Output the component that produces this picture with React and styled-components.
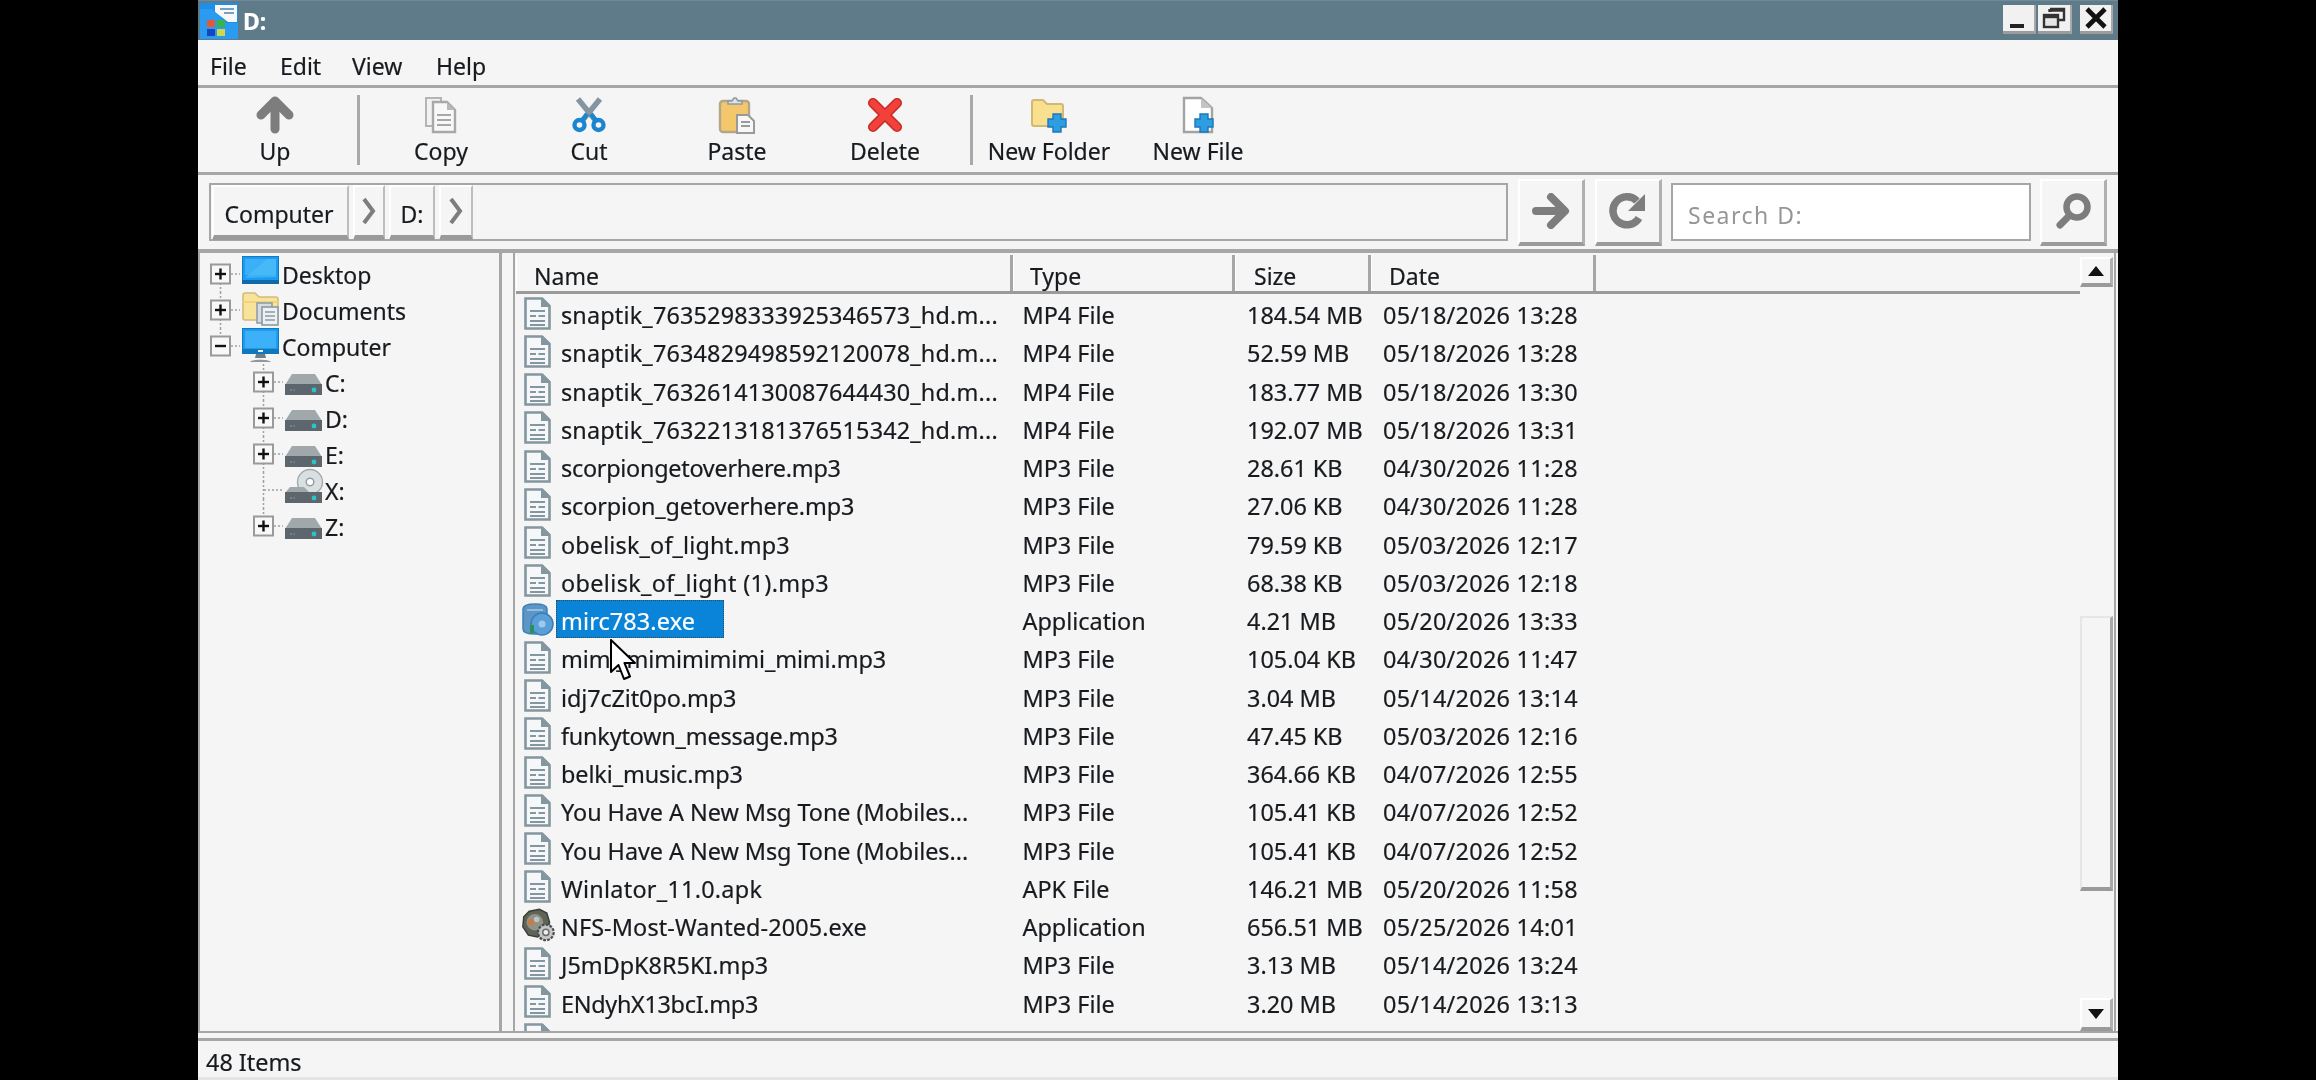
import React from "react";
import styled, { createGlobalStyle } from "styled-components";

const Global = createGlobalStyle`
  html, body { margin: 0; padding: 0; background: #000; }
  * { box-sizing: border-box; }
`;

const C = { face: "#f5f5f5", line: "#a6a6a6", dark: "#9a9a9a", text: "#171a1e", ico: "#7d7d7d", slate: "#84969f" };

const Page = styled.div`
  width: 2316px; height: 1080px; background: #000; display: flex; justify-content: center; overflow: hidden;
`;
const Window = styled.div`
  position: relative; width: 1920px; height: 1080px; background: ${C.face}; display: flex; flex-direction: column;
  font-family: "Noto Sans", "DejaVu Sans", sans-serif; font-size: 23px; color: ${C.text}; filter: blur(0.55px);
  -webkit-text-stroke: 0.2px currentColor;
`;
const TitleBar = styled.div`
  height: 40px; flex: none; background: #5f7b8a; display: flex; align-items: center; padding: 0 5px 0 2px; border-top: 1px solid #6f8b9a;
`;
const TitleText = styled.div`
  color: #fff; font-weight: 700; font-size: 23px; margin-left: 5px; flex: 1;
`;
const WinButton = styled.div`
  width: ${p => p.$w}px; height: 29px; margin-left: ${p => p.$ml}px; margin-top: -2px; background: #f1f1f1;
  border-bottom: 3px solid #9c9c9c; border-right: 2px solid #a8a8a8; display: flex; align-items: center; justify-content: center;
`;
const MenuBar = styled.div`
  height: 48px; flex: none; display: flex; align-items: center; padding: 6px 0 0 12px; border-bottom: 3px solid ${C.line};
`;
const MenuItem = styled.div`
  width: ${p => p.$w}px;
`;
const Toolbar = styled.div`
  height: 87px; flex: none; display: flex; border-bottom: 3px solid ${C.line};
`;
const ToolButton = styled.div`
  width: ${p => p.$w}px; flex: none; display: flex; flex-direction: column; align-items: center; padding-top: 8px;
`;
const ToolIcon = styled.div`
  height: 38px; display: flex; align-items: center; justify-content: center;
`;
const ToolLabel = styled.div`
  margin-top: 2px; line-height: 30px;
`;
const ToolSep = styled.div`
  width: 3px; flex: none; margin: 7px ${p => p.$r}px 7px ${p => p.$l}px; background: #a9a9a9;
`;
const AddressBar = styled.div`
  height: 78px; flex: none; display: flex; align-items: center; padding: 0 11px; border-bottom: 4px solid ${C.line};
`;
const PathBox = styled.div`
  width: 1299px; height: 58px; flex: none; border: 2px solid ${C.line}; display: flex; align-items: stretch; padding-left: 1px; gap: 4px; margin-right: 10px;
`;
const Crumb = styled.div`
  width: ${p => p.$w}px; flex: none; display: flex; align-items: center; justify-content: center; background: ${C.face};
  padding: ${p => p.$pt || 0}px ${p => p.$pr || 0}px 0 0;
  border-left: 2px solid #fff; border-top: 2px solid #fff; border-right: 2px solid #bdbdbd; border-bottom: 5px solid ${C.dark}; margin-bottom: -1px;
`;
const RaisedButton = styled.div`
  width: 67px; height: 67px; flex: none; margin-right: ${p => p.$mr}px; display: flex; align-items: center; justify-content: center;
  background: ${C.face}; border-left: 2px solid #fff; border-top: 2px solid #fff; border-right: 3px solid #b0b0b0; border-bottom: 4px solid ${C.dark};
`;
const SearchBox = styled.div`
  width: 360px; height: 58px; flex: none; margin-right: 9px; background: #fff; border: 2px solid ${C.line}; padding: 5px 0 0 15px;
  display: flex; align-items: center; color: #969696; letter-spacing: 1.5px; -webkit-text-stroke: 0;
`;
const Panes = styled.div`
  flex: 1; display: flex; min-height: 0; border-bottom: 2px solid ${C.line};
`;
const TreePane = styled.div`
  width: 304px; flex: none; border-left: 2px solid ${C.line}; border-right: 3px solid ${C.line}; padding-top: 3px; overflow: hidden;
`;
const TreeRow = styled.div`
  height: 36px; display: flex; align-items: center; padding-left: ${p => 2 + p.$depth * 43}px;
`;
const TreeIcon = styled.div`
  width: 41px; height: 36px; flex: none; align-self: flex-start; margin-left: ${p => (p.$depth ? 0 : 0)}px;
`;
const TreeLabel = styled.div`
  height: 36px; line-height: 38px; margin-left: -1px;
`;
const ListPane = styled.div`
  width: 1603px; margin-left: 11px; flex: none; display: flex; border-left: 2px solid ${C.line}; border-right: 2px solid ${C.line}; padding-left: 1px; padding-top: 2px;
`;
const ListColumn = styled.div`
  flex: 1; min-width: 0; display: flex; flex-direction: column; overflow: hidden;
`;
const HeaderRow = styled.div`
  height: 39px; flex: none; display: flex; border-bottom: 3px solid ${C.dark};
`;
const HeaderCell = styled.div`
  width: ${p => p.$w}px; flex: none; padding: 6px 0 0 ${p => p.$pl}px; display: flex; align-items: center; border-right: 3px solid ${C.line}; border-left: 1px solid #fff;
`;
const Rows = styled.div`
  flex: 1; overflow: hidden; display: grid; grid-auto-rows: 38.25px; align-content: start; font-size: 23.4px;
`;
const Row = styled.div`
  display: grid; grid-template-columns: 505.5px 224.5px 136px 1fr; align-items: center; white-space: nowrap; padding-left: 1px;
`;
const NameCell = styled.div`
  display: flex; align-items: center; height: 100%;
`;
const RowIcon = styled.div`
  width: 39px; flex: none; display: flex; align-items: center; padding-left: ${p => p.$pl}px;
`;
const NameLabel = styled.div`
  padding: 0 ${p => (p.$sel ? 29 : 3)}px 0 5px; height: 38px; line-height: 42px; letter-spacing: ${p => p.$sp}px;
  ${p => p.$sel && `background: #0a84d8; color: #fff; outline: 1px dotted #3a4a55; outline-offset: -1px;`}
`;
const Cell = styled.div`
  height: 38px; line-height: 42px;
`;
const DateCell = styled(Cell)`
  letter-spacing: 0.28px;
`;
const Scrollbar = styled.div`
  width: 33px; flex: none; margin-right: 1px; display: flex; flex-direction: column; align-items: stretch;
`;
const ScrollButton = styled.div`
  height: ${p => p.$h}px; margin-top: ${p => p.$mt}px; background: ${C.face}; display: flex; align-items: center; justify-content: center;
  border-left: 2px solid #fff; border-top: 2px solid #fff; border-right: 3px solid #b0b0b0; border-bottom: 4px solid ${C.dark};
`;
const ScrollThumb = styled.div`
  height: 275px; margin-top: 329px; background: ${C.face};
  border-left: 2px solid #e6e6e6; border-top: 2px solid #e6e6e6; border-right: 3px solid #a9a9a9; border-bottom: 4px solid ${C.dark};
`;
const ScrollSpace = styled.div`
  flex: 1;
`;
const StatusBar = styled.div`
  height: 42px; flex: none; margin-top: 5px; border-top: 3px solid ${C.line}; border-bottom: 3px solid #e4e4e4; padding: 6px 0 0 8px; display: flex; align-items: center; font-size: 23.4px;
`;
const CursorMark = styled.svg`
  position: absolute; left: 412px; top: 639px;
`;

/* ---------- drawings ---------- */
const UpIcon = () => (
  <svg width="38" height="38" viewBox="0 0 38 38">
    <path d="M19 33V6M5 19 19 5l14 14" fill="none" stroke={C.ico} strokeWidth="9" strokeLinecap="round" strokeLinejoin="round" />
  </svg>
);
const CopyIcon = () => (
  <svg width="34" height="38" viewBox="0 0 34 38">
    <path d="M2 2h15v28H2z" fill="#f2f2f2" stroke="#b4b4b4" strokeWidth="2" />
    <path d="M9 6h14l8 8v22H9z" fill="#f8f8f8" stroke="#a8a8a8" strokeWidth="2.4" />
    <path d="M23 6v8h8z" fill="#b8b8b8" />
    <path d="M13 19h14M13 24h14M13 29h14" stroke="#a8a8a8" strokeWidth="2.2" />
  </svg>
);
const CutIcon = () => (
  <svg width="36" height="36" viewBox="0 0 36 36">
    <path d="M7 2 25 24M29 2 11 24" stroke="#8494a0" strokeWidth="5.5" fill="none" />
    <circle cx="8.5" cy="28" r="5" fill="none" stroke="#1b86d0" strokeWidth="4.4" />
    <circle cx="27.5" cy="28" r="5" fill="none" stroke="#1b86d0" strokeWidth="4.4" />
    <path d="M11 24 16 17M25 24 20 17" stroke="#1b86d0" strokeWidth="4.4" />
  </svg>
);
const PasteIcon = () => (
  <svg width="38" height="38" viewBox="0 0 38 38">
    <rect x="2" y="5" width="29" height="31" rx="3" fill="#f5c76c" stroke="#b3a789" strokeWidth="2.4" />
    <path d="M10 8V5h4l2-3h2l2 3h4v3z" fill="#dfe3e6" stroke="#8e9aa4" strokeWidth="1.6" />
    <path d="M19 19h11l6 6v12H19z" fill="#f7f7f7" stroke="#9a9a9a" strokeWidth="2" />
    <path d="M23 26h9M23 30h9" stroke="#9a9a9a" strokeWidth="1.8" />
  </svg>
);
const DeleteIcon = () => (
  <svg width="36" height="36" viewBox="0 0 36 36">
    <path d="M6 6 30 30M30 6 6 30" stroke="#c22a24" strokeWidth="10" strokeLinecap="round" />
    <path d="M6 6 30 30M30 6 6 30" stroke="#f4403a" strokeWidth="7" strokeLinecap="round" />
  </svg>
);
const PlusBadge = ({ x, y }) => (
  <g transform={`translate(${x} ${y})`}>
    <path d="M-4-9h8v5h5v8H4v5H-4V4H-9V-4H-4z" fill="#2f9ee0" stroke="#1c78bb" strokeWidth="1.4" />
  </g>
);
const NewFolderIcon = () => (
  <svg width="38" height="38" viewBox="0 0 38 38">
    <path d="M2 6a2 2 0 0 1 2-2h9l4 4h14a2 2 0 0 1 2 2v20H4a2 2 0 0 1-2-2z" fill="#f8e08e" stroke="#d1b874" strokeWidth="2" />
    <PlusBadge x="27" y="27" />
  </svg>
);
const NewFileIcon = () => (
  <svg width="38" height="38" viewBox="0 0 38 38">
    <path d="M5 2h17l11 10v24H5z" fill="#fff" stroke="#a3a3a3" strokeWidth="2.4" />
    <path d="M22 2v10h11z" fill="#c4c4c4" />
    <PlusBadge x="25" y="27" />
  </svg>
);
const GoIcon = () => (
  <svg width="38" height="36" viewBox="0 0 38 36">
    <path d="M4 18h27M19 4 33 18 19 32" fill="none" stroke={C.ico} strokeWidth="8" strokeLinecap="round" strokeLinejoin="round" />
  </svg>
);
const RefreshIcon = () => (
  <svg width="38" height="38" viewBox="0 0 38 38">
    <path d="M28 9A14 14 0 1 0 30 26" fill="none" stroke={C.ico} strokeWidth="7.5" />
    <path d="M36 2v17H19z" fill={C.ico} />
  </svg>
);
const SearchIcon = () => (
  <svg width="38" height="38" viewBox="0 0 38 38">
    <circle cx="23" cy="15" r="10.5" fill="none" stroke={C.ico} strokeWidth="6.5" />
    <path d="M14 25 6 33" stroke={C.ico} strokeWidth="7" strokeLinecap="round" />
  </svg>
);
const ChevronIcon = () => (
  <svg width="16" height="30" viewBox="0 0 16 30">
    <path d="M3 3 12 15 3 27" fill="none" stroke="#7d7d7d" strokeWidth="4" />
  </svg>
);
const AppLogo = () => (
  <svg width="38" height="36" viewBox="0 0 38 36">
    <rect width="38" height="36" fill="#1d8fe8" />
    <path d="M15 2h22v17H28L15 9z" fill="#f7f7f7" />
    <path d="M20 6h14M24 10h10" stroke="#7aa0bd" strokeWidth="2" />
    <path d="M0 6h12l14 14h12v16H0z" fill="#2a9bf0" />
    <rect x="7" y="17" width="8" height="7" fill="#e35b34" />
    <rect x="17" y="17" width="8" height="7" fill="#38b449" />
    <rect x="7" y="26" width="8" height="7" fill="#1545c0" />
    <rect x="17" y="26" width="8" height="7" fill="#cfd84a" />
  </svg>
);
const MinGlyph = () => (
  <svg width="30" height="24" viewBox="0 0 30 24"><path d="M6 20h14" stroke="#222" strokeWidth="4" /></svg>
);
const MaxGlyph = () => (
  <svg width="30" height="24" viewBox="0 0 30 24">
    <path d="M11 3h14v11h-5" fill="none" stroke="#333" strokeWidth="2.4" /><path d="M11 3v3M11 4h14" stroke="#333" strokeWidth="3.4" />
    <rect x="5" y="9" width="14" height="12" fill="#e6e6e6" stroke="#333" strokeWidth="2.4" /><path d="M5 10.5h14" stroke="#333" strokeWidth="3.4" />
  </svg>
);
const CloseGlyph = () => (
  <svg width="26" height="24" viewBox="0 0 26 24"><path d="M4 3 22 21M22 3 4 21" stroke="#111" strokeWidth="4.6" /></svg>
);
const Expander = ({ open, box = true, up, down }) => (
  <svg width="40" height="36" viewBox="0 0 40 36" style={{ flex: "none" }}>
    {up && <path d="M18.5 0V9" stroke="#a0a0a0" strokeWidth="1.5" strokeDasharray="2 2" />}
    {down && <path d="M18.5 27V36" stroke="#a0a0a0" strokeWidth="1.5" strokeDasharray="2 2" />}
    {!box && <path d="M18.5 9V27" stroke="#a0a0a0" strokeWidth="1.5" strokeDasharray="2 2" />}
    <path d={box ? "M29 18H38" : "M19 18H38"} stroke="#a0a0a0" strokeWidth="1.5" strokeDasharray="2 2" />
    {box && (
      <>
        <rect x="9" y="8.5" width="19" height="19" fill="#f8f8f8" stroke="#9a9a9a" strokeWidth="2" />
        <path d="M13 18H24" stroke="#111" strokeWidth="2.4" />
        {!open && <path d="M18.5 12.5V23.5" stroke="#111" strokeWidth="2.4" />}
      </>
    )}
  </svg>
);
const DesktopIcon = () => (
  <svg width="37" height="30" viewBox="0 0 37 30">
    <rect x="0.5" y="0.5" width="36" height="27" fill="#1b9cf2" stroke="#1479bd" />
    <path d="M3 3h31v16L3 19z" fill="#3bb0f8" />
    <path d="M3 22 25 3h9v18z" fill="#52bff9" opacity=".6" />
    <rect x="0" y="24" width="37" height="4" fill="#1269a8" />
  </svg>
);
const DocumentsIcon = () => (
  <svg width="37" height="34" viewBox="0 0 37 34">
    <path d="M1 3a2 2 0 0 1 2-2h10l4 4h17a2 2 0 0 1 2 2v21H3a2 2 0 0 1-2-2z" fill="#f8e39a" stroke="#d2bc7b" strokeWidth="1.6" />
    <path d="M1 10h35" stroke="#f3d37a" strokeWidth="2" />
    <rect x="15" y="11" width="15" height="20" fill="#d6dde2" stroke="#8a9aa6" strokeWidth="1.5" />
    <rect x="20" y="15" width="16" height="18" fill="#eef1f3" stroke="#8a9aa6" strokeWidth="1.6" />
    <path d="M23 20h10M23 24h10M23 28h10" stroke="#8a9aa6" strokeWidth="1.4" />
  </svg>
);
const ComputerIcon = () => (
  <svg width="37" height="34" viewBox="0 0 37 34">
    <rect x="0.5" y="0.5" width="36" height="25" fill="#1b9cf2" stroke="#1479bd" />
    <path d="M3 3h31v17H3z" fill="#3cb1f8" />
    <rect x="0" y="21" width="37" height="5" fill="#1276bb" />
    <rect x="16" y="22" width="5" height="2" fill="#eaf6ff" />
    <path d="M14 26h9l1 4h-11z" fill="#6f7d86" />
    <path d="M8 34c2-3 19-3 21 0z" fill="#8d999f" />
  </svg>
);
const DriveIcon = ({ disc }) => (
  <svg width="37" height="36" viewBox="0 0 37 36" overflow="visible">
    {disc && (
      <>
        <circle cx="25" cy="10" r="12.5" fill="#dadfe2" stroke="#a3abb0" strokeWidth="1.4" />
        <circle cx="25" cy="10" r="3.8" fill="#fff" stroke="#969fa5" strokeWidth="1.5" />
      </>
    )}
    <path d={disc ? "M0 21 5 15h14l6 6z" : "M0 21 7 10h23l7 11z"} fill="#a0a8ac" />
    <rect x="0" y="20" width="37" height="11" fill="#5d666c" />
    <path d="M5 26h5" stroke="#808a90" strokeWidth="1.6" strokeDasharray="2 1.5" />
    <circle cx="29" cy="26" r="2.4" fill="#2cc4cb" />
  </svg>
);
const DocIcon = () => (
  <svg width="27" height="33" viewBox="0 0 27 33">
    <path d="M1.5 1.5H18L25.5 9V31.5H1.5z" fill="#f5f7f8" stroke={C.slate} strokeWidth="2.6" />
    <path d="M17 1h2l7 7v2h-9z" fill={C.slate} />
    <path d="M6 14h15M6 19h6M14.5 19H21M6 24h15M6 28h15" stroke={C.slate} strokeWidth="1.8" />
  </svg>
);
const MircIcon = () => (
  <svg width="33" height="33" viewBox="0 0 33 33">
    <path d="M2 6q0-5 12-5t12 5v20q0 5-12 5T2 26z" fill="#5d96c4" stroke="#3e7fb6" strokeWidth="1.5" />
    <path d="M6 7h16" stroke="#8cbfe2" strokeWidth="2" />
    <circle cx="21" cy="21" r="11" fill="#5b9fd8" stroke="#3b7fb8" strokeWidth="1.5" />
    <circle cx="21" cy="21" r="3.5" fill="#9ccaeb" />
    <rect x="9" y="22" width="4" height="8" fill="#2a8f5a" />
  </svg>
);
const NfsIcon = () => (
  <svg width="38" height="36" viewBox="0 0 38 36">
    <path d="M9 3 20 1l8 4 3 10-3 12-10 4-10-2-6-9 1-11z" fill="#5f6455" stroke="#3a3e3a" strokeWidth="1.6" />
    <circle cx="15" cy="15" r="9" fill="#8e948c" />
    <circle cx="11" cy="15" r="3.5" fill="#c87c48" />
    <circle cx="17" cy="12" r="3" fill="#bfc4bf" />
    <circle cx="27" cy="26" r="8.5" fill="#c4c7c7" stroke="#4c4c4c" strokeWidth="2.4" strokeDasharray="3 1.4" />
    <circle cx="27" cy="26" r="3.4" fill="#efefef" stroke="#6c6c6c" strokeWidth="1.6" />
  </svg>
);
const Tri = ({ down }) => (
  <svg width="20" height="12" viewBox="0 0 20 12"><path d={down ? "M2 1h16l-8 10z" : "M2 11h16L10 1z"} fill="#111" /></svg>
);

const files = [
  { name: "snaptik_7635298333925346573_hd.m...", type: "MP4 File", size: "184.54 MB", date: "05/18/2026 13:28", sp: 0.17 },
  { name: "snaptik_7634829498592120078_hd.m...", type: "MP4 File", size: "52.59 MB", date: "05/18/2026 13:28", sp: 0.17 },
  { name: "snaptik_7632614130087644430_hd.m...", type: "MP4 File", size: "183.77 MB", date: "05/18/2026 13:30", sp: 0.17 },
  { name: "snaptik_7632213181376515342_hd.m...", type: "MP4 File", size: "192.07 MB", date: "05/18/2026 13:31", sp: 0.17 },
  { name: "scorpiongetoverhere.mp3", type: "MP3 File", size: "28.61 KB", date: "04/30/2026 11:28", sp: -0.26 },
  { name: "scorpion_getoverhere.mp3", type: "MP3 File", size: "27.06 KB", date: "04/30/2026 11:28", sp: -0.12 },
  { name: "obelisk_of_light.mp3", type: "MP3 File", size: "79.59 KB", date: "05/03/2026 12:17", sp: 0.15 },
  { name: "obelisk_of_light (1).mp3", type: "MP3 File", size: "68.38 KB", date: "05/03/2026 12:18", sp: 0.37 },
  { name: "mirc783.exe", type: "Application", size: "4.21 MB", date: "05/20/2026 13:33", icon: "mirc", sp: 0.13 },
  { name: "mimi_mimimimimi_mimi.mp3", type: "MP3 File", size: "105.04 KB", date: "04/30/2026 11:47", sp: -0.12 },
  { name: "idj7cZit0po.mp3", type: "MP3 File", size: "3.04 MB", date: "05/14/2026 13:14", sp: -0.1 },
  { name: "funkytown_message.mp3", type: "MP3 File", size: "47.45 KB", date: "05/03/2026 12:16", sp: -0.2 },
  { name: "belki_music.mp3", type: "MP3 File", size: "364.66 KB", date: "04/07/2026 12:55", sp: -0.1 },
  { name: "You Have A New Msg Tone (Mobiles...", type: "MP3 File", size: "105.41 KB", date: "04/07/2026 12:52", sp: -0.04 },
  { name: "You Have A New Msg Tone (Mobiles...", type: "MP3 File", size: "105.41 KB", date: "04/07/2026 12:52", sp: -0.04 },
  { name: "Winlator_11.0.apk", type: "APK File", size: "146.21 MB", date: "05/20/2026 11:58", sp: 0.26 },
  { name: "NFS-Most-Wanted-2005.exe", type: "Application", size: "656.51 MB", date: "05/25/2026 14:01", icon: "nfs", sp: 0.12 },
  { name: "J5mDpK8R5KI.mp3", type: "MP3 File", size: "3.13 MB", date: "05/14/2026 13:24", sp: 0 },
  { name: "ENdyhX13bcI.mp3", type: "MP3 File", size: "3.20 MB", date: "05/14/2026 13:13", sp: -0.3 },
  { name: "", type: "", size: "", date: "", sp: 0 },
];

const tools = [
  ["Copy", <CopyIcon />], ["Cut", <CutIcon />], ["Paste", <PasteIcon />], ["Delete", <DeleteIcon />],
];

const tree = [
  { depth: 0, label: "Desktop", icon: <DesktopIcon />, down: true },
  { depth: 0, label: "Documents", icon: <DocumentsIcon />, up: true, down: true },
  { depth: 0, label: "Computer", icon: <ComputerIcon />, up: true, open: true },
  { depth: 1, label: "C:", icon: <DriveIcon />, up: true, down: true },
  { depth: 1, label: "D:", icon: <DriveIcon />, up: true, down: true },
  { depth: 1, label: "E:", icon: <DriveIcon />, up: true, down: true },
  { depth: 1, label: "X:", icon: <DriveIcon disc />, up: true, down: true, box: false },
  { depth: 1, label: "Z:", icon: <DriveIcon />, up: true },
];

export default function App() {
  return (
    <>
      <Global />
      <Page>
        <Window>
          <TitleBar>
            <AppLogo />
            <TitleText>D:</TitleText>
            <WinButton $w={33} $ml={0}><MinGlyph /></WinButton>
            <WinButton $w={34} $ml={2}><MaxGlyph /></WinButton>
            <WinButton $w={33} $ml={8}><CloseGlyph /></WinButton>
          </TitleBar>
          <MenuBar>
            <MenuItem $w={70}>File</MenuItem>
            <MenuItem $w={72}>Edit</MenuItem>
            <MenuItem $w={84}>View</MenuItem>
            <MenuItem $w={70}>Help</MenuItem>
          </MenuBar>
          <Toolbar>
            <ToolButton $w={154}><ToolIcon><UpIcon /></ToolIcon><ToolLabel>Up</ToolLabel></ToolButton>
            <ToolSep $l={5} $r={7} />
            {tools.map(([label, icon]) => (
              <ToolButton $w={148} key={label}><ToolIcon>{icon}</ToolIcon><ToolLabel>{label}</ToolLabel></ToolButton>
            ))}
            <ToolSep $l={11} $r={1} />
            <ToolButton $w={150}><ToolIcon><NewFolderIcon /></ToolIcon><ToolLabel>New Folder</ToolLabel></ToolButton>
            <ToolButton $w={148}><ToolIcon><NewFileIcon /></ToolIcon><ToolLabel>New File</ToolLabel></ToolButton>
          </Toolbar>
          <AddressBar>
            <PathBox>
              <Crumb $w={137} $pt={5} $pr={3}>Computer</Crumb>
              <Crumb $w={32}><ChevronIcon /></Crumb>
              <Crumb $w={46} $pt={5}>D:</Crumb>
              <Crumb $w={34}><ChevronIcon /></Crumb>
            </PathBox>
            <RaisedButton $mr={10}><GoIcon /></RaisedButton>
            <RaisedButton $mr={9}><RefreshIcon /></RaisedButton>
            <SearchBox>Search D:</SearchBox>
            <RaisedButton $mr={0}><SearchIcon /></RaisedButton>
          </AddressBar>
          <Panes>
            <TreePane>
              {tree.map(t => (
                <TreeRow $depth={t.depth} key={t.label}>
                  <Expander open={t.open} up={t.up} down={t.down} box={t.box !== false} />
                  <TreeIcon $depth={t.depth}>{t.icon}</TreeIcon>
                  <TreeLabel>{t.label}</TreeLabel>
                </TreeRow>
              ))}
            </TreePane>
            <ListPane>
              <ListColumn>
                <HeaderRow>
                  <HeaderCell $w={497} $pl={17}>Name</HeaderCell>
                  <HeaderCell $w={222} $pl={16}>Type</HeaderCell>
                  <HeaderCell $w={136} $pl={18}>Size</HeaderCell>
                  <HeaderCell $w={225} $pl={17}>Date</HeaderCell>
                </HeaderRow>
                <Rows>
                  {files.map((f, i) => (
                    <Row key={i}>
                      <NameCell>
                        <RowIcon $pl={f.icon ? 4 : 7}>
                          {f.icon === "mirc" ? <MircIcon /> : f.icon === "nfs" ? <NfsIcon /> : <DocIcon />}
                        </RowIcon>
                        <NameLabel $sel={f.icon === "mirc"} $sp={f.sp}>{f.name}</NameLabel>
                      </NameCell>
                      <Cell>{f.type}</Cell>
                      <Cell>{f.size}</Cell>
                      <DateCell>{f.date}</DateCell>
                    </Row>
                  ))}
                </Rows>
              </ListColumn>
              <Scrollbar>
                <ScrollButton $h={30} $mt={2}><Tri /></ScrollButton>
                <ScrollThumb />
                <ScrollSpace />
                <ScrollButton $h={33} $mt={0}><Tri down /></ScrollButton>
              </Scrollbar>
            </ListPane>
          </Panes>
          <StatusBar>48 Items</StatusBar>
          <CursorMark width="28" height="44" viewBox="0 0 28 44">
            <path d="M1 1V33L8.5 26 14 40l6-2.5L14.5 24H25z" fill="#fff" stroke="#000" strokeWidth="2" strokeLinejoin="round" />
          </CursorMark>
        </Window>
      </Page>
    </>
  );
}
